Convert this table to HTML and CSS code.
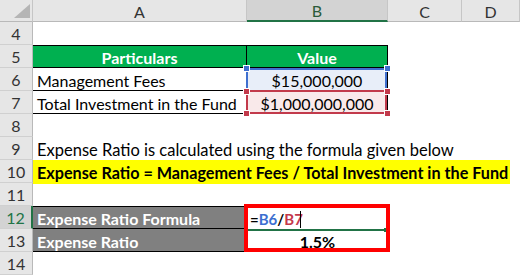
FILE: index.html
```html
<!DOCTYPE html>
<html>
<head>
<meta charset="utf-8">
<link rel="stylesheet" href="styles.css">
</head>
<body>
<div class="sheet">
  <div class="hd corner"><svg class="tri" width="16" height="14" viewBox="0 0 16 14"><polygon points="16,0 16,14 0,14" fill="#b5b5b5"/></svg></div>
  <div class="hd">A</div>
  <div class="hd hd-sel">B</div>
  <div class="hd">C</div>
  <div class="hd">D</div>

  <div class="rh">4</div><div class="row-empty"></div>

  <div class="rh">5</div>
  <div class="c green bt br bb center">Particulars</div>
  <div class="c green bt br bb center">Value</div>
  <div class="c span2"></div>

  <div class="rh">6</div>
  <div class="c br bb">Management Fees</div>
  <div class="c br bb center fill-blue">$15,000,000</div>
  <div class="c span2"></div>

  <div class="rh">7</div>
  <div class="c br bb">Total Investment in the Fund</div>
  <div class="c br bb center fill-pink">$1,000,000,000</div>
  <div class="c span2"></div>

  <div class="rh">8</div><div class="row-empty"></div>

  <div class="rh">9</div>
  <div class="c wide note">Expense Ratio is calculated using the formula given below</div>

  <div class="rh">10</div>
  <div class="c wide hl"><span class="yellow">Expense Ratio = Management Fees / Total Investment in the Fund</span></div>

  <div class="rh">11</div><div class="row-empty"></div>

  <div class="rh rh-sel">12</div>
  <div class="c gray bt bb br">Expense Ratio Formula</div>
  <div class="c formula"><span class="k">=</span><span class="ref-b">B6</span><span class="k">/</span><span class="ref-r">B7</span></div>
  <div class="c span2"></div>

  <div class="rh">13</div>
  <div class="c gray bb br">Expense Ratio</div>
  <div class="c center bold">1.5%</div>
  <div class="c span2"></div>

  <div class="rh">14</div><div class="row-empty"></div>

  <div class="sel-blue"></div>
  <div class="sel-red"></div>
  <div class="hdl hb h1"></div>
  <div class="hdl hb h2"></div>
  <div class="hdl hr h3"></div>
  <div class="hdl hr h4"></div>
  <div class="hdl hr h5"></div>
  <div class="hdl hr h6"></div>
  <div class="active-line"></div>
  <div class="fill-handle"></div>
  <div class="cursor"></div>
  <div class="red-box"></div>
</div>
</body>
</html>
```
FILE: styles.css
```css
body {
  margin: 0;
  background: #ffffff;
  font-family: Lato, "Liberation Sans", sans-serif;
}

.sheet {
  position: relative;
  display: grid;
  grid-template-columns: 33px 214px 141px 74px 58px;
  grid-template-rows: 22px repeat(11, 23px);
  width: 520px;
  height: 276px;
  overflow: hidden;
  background: #ffffff;
}

.hd {
  box-sizing: border-box;
  background: #e6e6e6;
  border-right: 1px solid #c6c6c6;
  border-bottom: 1px solid #b9b9b9;
  display: flex;
  align-items: center;
  justify-content: center;
  color: #333333;
  font-size: 16px;
  padding-top: 1px;
}

.corner {
  position: relative;
  justify-content: flex-end;
  align-items: flex-end;
  padding: 0 2px 3px 0;
}

.hd-sel {
  background: #d3d3d3;
  color: #2b5b3a;
  border-bottom: 2px solid #217346;
}

.rh {
  box-sizing: border-box;
  background: #e6e6e6;
  border-right: 1px solid #b9b9b9;
  border-bottom: 1px solid #d0d0d0;
  display: flex;
  align-items: center;
  justify-content: center;
  color: #333333;
  font-size: 16px;
  padding-top: 1px;
}

.rh-sel {
  background: #d3d3d3;
  color: #217346;
  border-right: 2px solid #217346;
}

.row-empty {
  grid-column: 2 / -1;
}

.span2 {
  grid-column: 4 / -1;
}

.c {
  box-sizing: border-box;
  display: flex;
  align-items: center;
  padding: 2px 4px 0;
  font-size: 16px;
  color: #000000;
  white-space: nowrap;
}

.wide {
  grid-column: 2 / -1;
}

.note {
  font-size: 16.5px;
}

.hl {
  padding-left: 0;
  padding-top: 0;
}

.center {
  justify-content: center;
}

.bold {
  font-weight: bold;
}

.bt { border-top: 1px solid #000000; }
.br { border-right: 1px solid #000000; }
.bb { border-bottom: 1px solid #000000; }

.green {
  background: #00b050;
  color: #ffffff;
  font-weight: bold;
}

.fill-blue {
  background: #e8eef9;
}

.fill-pink {
  background: #f9e9ea;
}

.yellow {
  display: flex;
  align-items: center;
  box-sizing: border-box;
  width: 477px;
  height: 24px;
  padding: 2px 0 0 4px;
  background: #ffff00;
  font-weight: bold;
  font-size: 16.2px;
}

.gray {
  background: #808080;
  color: #ffffff;
  font-weight: bold;
}

.formula {
  font-weight: bold;
  font-size: 15px;
  padding-left: 3px;
}

.k { color: #000000; }
.ref-b { color: #3c6fd0; }
.ref-r { color: #c4384a; }

.sel-blue {
  position: absolute;
  left: 246px;
  top: 68px;
  width: 141px;
  height: 24px;
  box-sizing: border-box;
  border: 2px solid #3f6fcf;
}

.sel-red {
  position: absolute;
  left: 246px;
  top: 90px;
  width: 141px;
  height: 24px;
  box-sizing: border-box;
  border: 2px solid #c23a4b;
}

.hdl {
  position: absolute;
  width: 7px;
  height: 7px;
  box-sizing: border-box;
  border: 1px solid #ffffff;
}

.hb { background: #3f6fcf; }
.hr { background: #c23a4b; }

.h1 { left: 243px; top: 65px; }
.h2 { left: 384px; top: 65px; }
.h3 { left: 243px; top: 88px; }
.h4 { left: 384px; top: 88px; }
.h5 { left: 243px; top: 110px; }
.h6 { left: 384px; top: 110px; }

.active-line {
  position: absolute;
  left: 248px;
  top: 229px;
  width: 136px;
  height: 2px;
  background: #217346;
}

.fill-handle {
  position: absolute;
  left: 384px;
  top: 228px;
  width: 4px;
  height: 4px;
  background: #217346;
}

.cursor {
  position: absolute;
  left: 300px;
  top: 211px;
  width: 1px;
  height: 17px;
  background: #000000;
}

.red-box {
  position: absolute;
  left: 244px;
  top: 204px;
  width: 146px;
  height: 48px;
  box-sizing: border-box;
  border: 4px solid #ff0000;
}
```
